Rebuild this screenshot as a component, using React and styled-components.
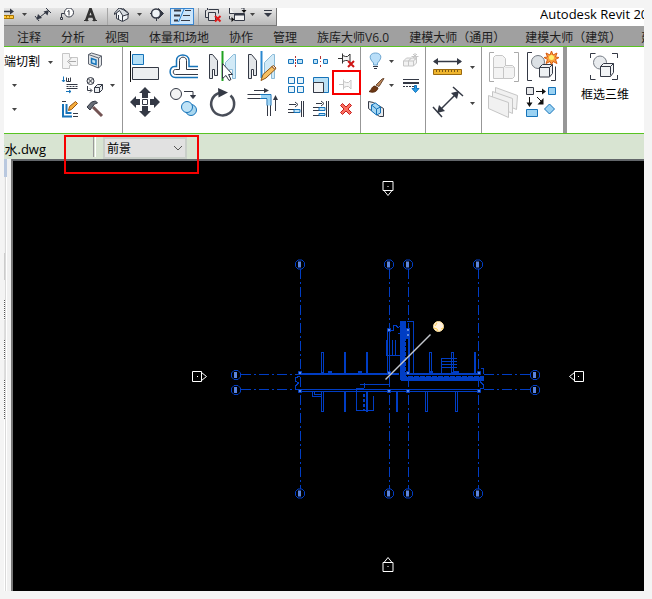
import React from "react";
import styled, { createGlobalStyle, css } from "styled-components";

const GlobalStyle = createGlobalStyle`
  * { box-sizing: border-box; }
  body {
    margin: 0;
    background: #f4f4f4;
    color: #1c1c1c;
    font: 12px/16px "Open Sans", "Noto Sans CJK SC", sans-serif;
  }
`;

const AppWindow = styled.main`
  margin: 8px 8px 8px 4px;
  overflow: hidden;
  background: #fff;
`;

const TitleBar = styled.header`
  display: flex;
  justify-content: space-between;
  height: 18px;
  overflow: hidden;
`;

const QuickAccess = styled.div`
  display: flex;
  flex: none;
  border-right: 1px solid #777;
  border-bottom: 1px solid #777;
  background: linear-gradient(#e6e6e6, #b9b9b9);
`;

const QuickButton = styled.button`
  display: block;
  flex: none;
  padding: 0;
  border: 0;
  background: ${(p) => (p.$active ? "#cbe5fb" : "none")};
  ${(p) => p.$active && css`box-shadow: inset 0 0 0 1px #3b86cf;`}
`;

const QuickDivider = styled.span`
  width: ${(p) => p.$w}px;
  background: linear-gradient(#a6a6a6, #a6a6a6) center / 1px 100% no-repeat;
`;

const Title = styled.h1`
  margin: 0;
  width: 104px;
  overflow: hidden;
  white-space: nowrap;
  font: inherit;
  font-size: 13px;
  line-height: 12px;
  color: #000;
`;

const TabStrip = styled.nav`
  display: flex;
  height: 21px;
  padding-left: 3px;
  overflow: hidden;
  background: #a0a0a0;
  border-bottom: 1px solid #58c322;
`;

const Tab = styled.button`
  flex: none;
  padding: 4px 10px 0;
  border: 0;
  background: none;
  color: #1e1e1e;
  font: inherit;
  white-space: nowrap;
`;

const Ribbon = styled.section`
  display: flex;
  height: 87px;
  background: #fff;
  border-bottom: 1px solid #58c322;
`;

const Panel = styled.div`
  display: flex;
  flex: none;
  padding: 2px ${(p) => p.$right || 0}px 0 ${(p) => p.$left || 0}px;
  border-right: ${(p) => p.$edge || 1}px solid #979797;
`;

const ToolGrid = styled.div`
  display: grid;
  align-content: start;
  grid-template-columns: ${(p) => p.$cols};
  grid-auto-rows: ${(p) => p.$row}px;
`;

const Tool = styled.button`
  position: relative;
  display: block;
  padding: 0;
  border: 0;
  background: none;
  font: inherit;
  text-align: left;
  white-space: nowrap;
`;

const CutTool = styled(Tool)`
  display: flex;
  align-items: center;
  justify-content: space-between;
  padding-top: 2px;
`;

const LabelTool = styled(Tool)`
  display: flex;
  flex-direction: column;
  align-items: center;
  gap: 4px;
  padding: 4px 12px 0 14px;
  height: 60px;
`;

const Highlight = styled.span`
  position: absolute;
  top: ${(p) => p.$top}px;
  left: ${(p) => p.$left}px;
  width: ${(p) => p.$w}px;
  height: ${(p) => p.$h}px;
  border: 2px solid #f60000;
  z-index: 2;
  pointer-events: none;
`;

const Svg = styled.svg`
  display: block;
`;

const OptionsBar = styled.section`
  position: relative;
  display: flex;
  align-items: center;
  height: 25px;
  background: #d8e4d2;
`;

const FileName = styled.span`
  display: flex;
  justify-content: flex-end;
  width: 42px;
  padding-top: 4px;
  overflow: hidden;
  color: #000;
  font-size: 13px;
  white-space: nowrap;
`;

const Separator = styled.span`
  width: 3px;
  height: 20px;
  margin-left: 47px;
  border-left: 1px solid #9a9a9a;
  border-right: 1px solid #fff;
`;

const SelectBox = styled.label`
  position: relative;
  display: flex;
  align-items: center;
  margin-left: 7px;
  padding-top: 3px;
`;

const Select = styled.select`
  appearance: none;
  width: 84px;
  height: 22px;
  padding: 2px 2px 0;
  border: 2px solid #c9cfc9;
  border-radius: 0;
  background: #e1e1e1;
  color: #000;
  font: inherit;
`;

const Chevron = styled(Svg)`
  position: absolute;
  right: 4px;
  top: 10px;
  pointer-events: none;
`;

const Workspace = styled.section`
  display: flex;
`;

const Gutter = styled.aside`
  display: flex;
  flex-direction: column;
  flex: none;
  width: 7px;
  background: linear-gradient(90deg, #fff 1px, #d9d9d9 1px, #d9d9d9 2px, #fff 2px, #fff 3px, #f0f0f0 3px);
`;

const GutterPiece = styled.span`
  width: ${(p) => (p.$wide ? 3 : 1)}px;
  height: ${(p) => p.$h}px;
  background: ${(p) =>
    p.$dots ? "repeating-linear-gradient(#555 0 1px, #fff 1px 2px)" : p.$color};
`;

const View = styled.div`
  flex: 1;
  min-width: 0;
  border-top: 2px solid #62666a;
  border-left: 2px solid #777;
  background: #000;
`;

const Drawing = styled.svg`
  display: block;
  width: 100%;
  height: auto;
`;

const D = "#343945";
const B = "#1673b9";
const L = "#bfe3f7";
const G = "#c6c6c6";

function Art({ box, children }) {
  const [, , w, h] = box;
  return (
    <Svg width={w} height={h} viewBox={box.join(" ")} fill="none" stroke={D} aria-hidden="true">
      {children}
    </Svg>
  );
}

const Caret = ({ box, x, y }) => (
  <Art box={box}>
    <path d={`M${x - 2} ${y - 1}h5l-2.5 3z`} fill="#444" stroke="none" />
  </Art>
);

function QuickBar() {
  const carets = (x, w, cx) => (
    <QuickButton aria-label="更多"><Caret box={[x, 8, w, 18]} x={cx} y={14} /></QuickButton>
  );
  return (
    <QuickAccess>
      <QuickButton aria-label="测量">
        <Art box={[4, 8, 12, 18]}>
          <path d="M4 11.500h8" strokeWidth="1.500" />
          <path d="M10 8.500l4 3-4 3z" fill={D} stroke="none" />
          <path d="M2 15.500h11.500v3H2z" fill="#ffc83b" stroke="#a87400" />
          <path d="M6.500 16v1.500M9.500 16v1.500" stroke="#a87400" />
        </Art>
      </QuickButton>
      {carets(16, 16, 24)}
      <QuickButton aria-label="对齐尺寸标注">
        <Art box={[32, 8, 22, 18]}>
          <path d="M38 18.500l9-7M35 16l4 5M46 8l5 5" />
          <path d="M36.500 19.500l1.500-5.500 4 4zM49 10l-1.500 5.500-4-4z" fill={D} stroke="none" />
        </Art>
      </QuickButton>
      <QuickButton aria-label="按类别标记">
        <Art box={[54, 8, 26, 18]}>
          <circle cx="69" cy="12.500" r="4.500" fill="#fff" />
          <path d="M67.500 11.500l1.500-1v5M64 13.500h-2.500v4" />
          <path d="M60.500 17.500h2v2h-2z" fill="#ddd" />
        </Art>
      </QuickButton>
      <QuickButton aria-label="文字">
        <Art box={[80, 8, 24, 18]}>
          <path d="M86 21l4.500-12.500L95 21M88 16.500h5" strokeWidth="2.500" stroke="#333" />
          <path d="M84 20.500h4.500M92.500 20.500h4.500" stroke="#333" />
        </Art>
      </QuickButton>
      <QuickDivider $w={6} />
      <QuickButton aria-label="默认三维视图">
        <Art box={[110, 8, 22, 18]}>
          <path d="M116.500 12.500v6l6 3 5.500-3v-6l-5.500-4.500z" fill="#f1f4f6" />
          <path d="M114.500 13l4.500-5 5 2 5 4-6 2-3.500-5.500-5 4z" fill="#d7dce1" />
          <path d="M122.500 16v5M118.500 15v4" />
        </Art>
      </QuickButton>
      {carets(132, 15, 139)}
      <QuickButton aria-label="剖面">
        <Art box={[147, 8, 23, 18]}>
          <path d="M158.500 8.500l5 5-5 5z" fill={D} />
          <circle cx="156" cy="13.500" r="4.500" fill="#eef2f5" strokeWidth="1.500" />
          <path d="M150 13.500h2M156.500 18v3" />
        </Art>
      </QuickButton>
      <QuickButton $active aria-label="细线" aria-pressed="true">
        <Art box={[170, 8, 24, 18]}>
          <path d="M174 10.500h7M174 15.500h6M174 20.500h4" strokeWidth="2" />
          <path d="M185 10.500h6M183 15.500h7M181 20.500h9" />
          <path d="M184.500 8l-6 14" stroke="#2581d2" />
        </Art>
      </QuickButton>
      <QuickDivider $w={8} />
      <QuickButton aria-label="关闭隐藏窗口">
        <Art box={[202, 8, 24, 18]}>
          <path d="M207.500 8v2M206.500 10.500h-1v7h3M208.500 9.500h10v4M208.500 12.500h7v8h-7z" fill="#e2e2e2" />
          <path d="M215 16l5.500 5.500M220.500 16l-5.500 5.500" stroke="#e11818" strokeWidth="2" />
        </Art>
      </QuickButton>
      <QuickButton aria-label="切换窗口">
        <Art box={[226, 8, 22, 18]}>
          <path d="M229.500 8v5.500h5M241 8h3v3M234.500 13.500h10v7h-10zM229.500 16v3h3" fill="#f2f2f2" />
          <path d="M235 14.500h9" strokeWidth="2" />
          <path d="M231.500 17l3 2.500-3 2.500zM241.500 10h5l-2.500 3z" fill="#111" stroke="none" />
        </Art>
      </QuickButton>
      {carets(248, 10, 252)}
      <QuickButton aria-label="自定义快速访问工具栏">
        <Art box={[258, 8, 18, 18]}>
          <path d="M264 10.500h8" />
          <path d="M264 13h8l-4 4z" fill={D} stroke="none" />
        </Art>
      </QuickButton>
    </QuickAccess>
  );
}

const Pin = ({ x, y, color }) => (
  <g stroke={color} fill="#f4f4f4">
    <path d={`M${x} ${y}h4M${x + 4.5} ${y - 5}v10M${x + 4.5} ${y - 3}l3 1h2l2.500-2.500v9l-2.500-2.500h-2l-3 1`} />
  </g>
);

const Cube = ({ x, y, s, color = D, fill = "#e9ecef" }) => (
  <g stroke={color} fill={fill}>
    <path d={`M${x} ${y + 3}h${s}v${s}h-${s}zM${x} ${y + 3}l3-3h${s}v${s}l-3 3M${x + s} ${y + 3}l3-3`} />
  </g>
);

function ModifyPanel() {
  return (
    <Panel>
      <ToolGrid $cols="54px 24px 24px 16px" $row={24}>
        <CutTool>
          端切割
          <Caret box={[46, 49, 12, 24]} x={50} y={61} />
        </CutTool>
        <Tool aria-label="连接端切割">
          <Art box={[58, 49, 24, 24]}>
            <path d="M62.500 53.500h7v4h8v8h-8v3h-7z" fill="#f5f5f5" stroke={G} />
            <path d="M76 61.500h-7M71.500 58l-4 3.500 4 3.500" stroke="#aaa" />
          </Art>
        </Tool>
        <Tool aria-label="墙洞口">
          <Art box={[82, 49, 24, 24]}>
            <path d="M88.500 54.500l3-1.500 10 3v9l-3 3-10-4z" fill="#e2e5e8" stroke="#5d636e" />
            <path d="M98.500 58v10M98.500 58l3-2M88.500 54.500l10 3.500" stroke="#5d636e" />
            <path d="M91.500 58.500l4.500 1.500v4.500l-4.500-1.500z" fill={L} stroke={B} strokeWidth="1.500" />
          </Art>
        </Tool>
        <span />
        <Tool aria-label="剪切"><Caret box={[4, 73, 54, 24]} x={14} y={85} /></Tool>
        <Tool aria-label="梁连接">
          <Art box={[58, 73, 24, 24]}>
            <path d="M66.500 77.500v4h4v-4M68.500 78v3M66.500 84.500h11M66.500 88.500h11" />
            <path d="M63.500 76.500v5M62 80l1.500 2 1.500-2M66 91.500h5M69 90l2 1.500-2 1.500" stroke={B} />
            <path d="M66.500 86.500h11" strokeDasharray="2 1" />
          </Art>
        </Tool>
        <Tool aria-label="拆分面">
          <Art box={[82, 73, 24, 24]}>
            <circle cx="90.500" cy="81" r="3.500" fill="#eee" />
            <path d="M88 78.500l5 5M93 78.500l-5 5M87.500 86v4.500h4M90 88.500l2 2-2 2" />
            <Cube x={94.5} y={84.5} s={5} />
          </Art>
        </Tool>
        <Tool aria-label="更多几何图形"><Caret box={[106, 73, 16, 24]} x={112} y={85} /></Tool>
        <Tool aria-label="连接"><Caret box={[4, 97, 54, 24]} x={14} y={109} /></Tool>
        <Tool aria-label="墙连接">
          <Art box={[58, 97, 24, 24]}>
            <path d="M62 101.500h4M73 113.500h5M73 116.500h5" />
            <path d="M63 104v12.500h9M66.500 104v9h5" stroke={B} strokeWidth="2" />
            <path d="M68.500 110.500l1-4 6-5 2 2-6 6z" fill="#f6ad3c" stroke="#97520d" />
          </Art>
        </Tool>
        <Tool aria-label="拆除">
          <Art box={[82, 97, 24, 24]}>
            <path d="M93 107l9 9" stroke="#735353" strokeWidth="3" />
            <path d="M87 107l4.500-5 4-1 2 2-3 1-4.500 6z" fill="#666c76" />
          </Art>
        </Tool>
      </ToolGrid>
    </Panel>
  );
}

const MirrorHalves = ({ x }) => (
  <>
    <path d={`M${x} 54.500h3l5 6v15h-3v-6h-2v9h-3z`} fill="#e3e6e9" />
    <path d={`M${x + 26} 54.500h-2l-8 8v13h4v-6h3v9h3z`} fill="#d2eaf7" stroke="#8abbd8" />
  </>
);

function EditPanel() {
  return (
    <Panel $left={3} $right={2}>
      <ToolGrid $cols="repeat(4, 39px)" $row={36}>
        <Tool aria-label="对齐">
          <Art box={[126, 49, 39, 36]}>
            <path d="M130.500 51v31" stroke="#111" />
            <path d="M132.500 54.500h11v10h-11z" fill="#b4dff6" stroke={B} />
            <path d="M132.500 67.500h26v12h-26z" fill="#eceef0" />
          </Art>
        </Tool>
        <Tool aria-label="偏移">
          <Art box={[165, 49, 39, 36]}>
            <path d="M198 66.500h-9v-6c0-7.500-12.500-7.500-12.500 0v6h-2c-6 0-6 11 1 11h22.500" stroke={B} strokeWidth="1.500" />
            <path d="M198 69.500h-11.500v-9c0-4.500-7-4.500-7 0v9h-4c-3 0-3 5 0 5h22.500" />
          </Art>
        </Tool>
        <Tool aria-label="镜像 - 拾取轴">
          <Art box={[204, 49, 39, 36]}>
            <MirrorHalves x={209.5} />
            <path d="M222.500 51v30" stroke="#21a321" strokeWidth="2" />
            <path d="M222.500 63.500v15l3.500-3 3 5 2-1-2.500-5h4z" fill="#fff" />
          </Art>
        </Tool>
        <Tool aria-label="镜像 - 绘制轴">
          <Art box={[243, 49, 39, 36]}>
            <MirrorHalves x={248.5} />
            <path d="M261.500 51v27" stroke="#2b88d0" strokeWidth="2" />
            <path d="M261 80.500l2-6 9-8 3 3-9 8.500z" fill="#f7c063" stroke="#8d5513" />
            <path d="M272 66.500l1.500-1 2.500 2.500-1 1.500z" fill="#f6dedd" stroke="#8d5513" />
          </Art>
        </Tool>
        <Tool aria-label="移动">
          <Art box={[126, 85, 39, 36]}>
            <path d="M145 87l6 6h-3v5h-6v-5h-3zM145 117l6-6h-3v-5h-6v5h-3zM130 102l6-6v3h4v6h-4v3zM160 102l-6-6v3h-4v6h4v3z" fill={D} stroke="none" />
            <path d="M142.500 99.500h5v5h-5z" fill="#fff" />
          </Art>
        </Tool>
        <Tool aria-label="复制">
          <Art box={[165, 85, 39, 36]}>
            <circle cx="176" cy="94" r="5.500" fill="#f2f3f4" />
            <path d="M184 91.500h9v4" />
            <path d="M190.500 95.500h5l-2.500 3z" fill={D} />
            <circle cx="191" cy="110" r="5.500" fill="#a9d7ef" stroke={B} />
            <circle cx="187" cy="107" r="5.500" fill={L} stroke={B} />
          </Art>
        </Tool>
        <Tool aria-label="旋转">
          <Art box={[204, 85, 39, 36]}>
            <path d="M230.500 95.500a11.500 11.500 0 1 1 -11.500 -2.500" stroke="#484d58" strokeWidth="2.500" />
            <path d="M218 88l10 4.500-9.500 5z" fill={D} stroke="none" />
          </Art>
        </Tool>
        <Tool aria-label="修剪/延伸为角">
          <Art box={[243, 85, 39, 36]}>
            <path d="M254 90.500h13M247.500 94.500h13M247.500 98.500h13M267.500 105v11M270.500 105v11M275.500 98v13" />
            <path d="M261 96.500h8v9" stroke="#9dd5f5" strokeWidth="3" />
            <path d="M260 94.500h11v11M260 98.500h7v7" stroke={B} />
            <path d="M264 88l5 2.500-5 2.500zM273 100l2.500-5 2.500 5z" fill={D} stroke="none" />
          </Art>
        </Tool>
      </ToolGrid>
      <ToolGrid $cols="26px 25px 25px" $row={24}>
        <Tool aria-label="拆分图元">
          <Art box={[282, 49, 26, 24]}>
            <path d="M288.500 59.500h5v4h-5zM297.500 59.500h5v4h-5z" fill={L} stroke={B} />
            <path d="M295.500 56v12" stroke="#b53131" strokeDasharray="2 1" />
          </Art>
        </Tool>
        <Tool aria-label="用间隙拆分">
          <Art box={[308, 49, 25, 24]}>
            <path d="M313.500 59.500h4v4h-4zM323.500 59.500h4v4h-4z" fill={L} stroke={B} />
            <path d="M320.500 56v3M320.500 65v2M320.500 61v1" stroke="#b53131" />
          </Art>
        </Tool>
        <Tool aria-label="解锁">
          <Art box={[333, 49, 25, 24]}>
            <Pin x={338} y={58.5} color="#333" />
            <path d="M348 61l6 6M354 61l-6 6" stroke="#cf1515" strokeWidth="2" />
          </Art>
        </Tool>
        <Tool aria-label="阵列">
          <Art box={[282, 73, 26, 24]}>
            <path d="M288.500 77.500h6v6h-6zM297.500 77.500h6v6h-6zM288.500 86.500h6v6h-6zM297.500 86.500h6v6h-6z" fill="#e8f4fa" stroke={B} />
          </Art>
        </Tool>
        <Tool aria-label="缩放">
          <Art box={[308, 73, 25, 24]}>
            <path d="M313.500 77.500h15v15h-15z" fill="#b9e0f5" stroke={B} />
            <path d="M313.500 82.500h10v10h-10z" fill="#f0f2f4" />
          </Art>
        </Tool>
        <Tool aria-label="锁定">
          <Art box={[333, 73, 25, 24]}><Pin x={339} y={84.5} color={G} /></Art>
          <Highlight $top={-3} $left={-1} $w={29} $h={25} />
        </Tool>
        <Tool aria-label="修剪/延伸单个图元">
          <Art box={[282, 97, 26, 24]}>
            <path d="M289 104.500h7M295 102l3 2.500-3 2.500M288 109.500h6M288 112.500h6M301.500 101v16M303.500 101v16" />
            <path d="M294 109.500h6v3h-6z" fill={L} stroke={B} />
          </Art>
        </Tool>
        <Tool aria-label="修剪/延伸多个图元">
          <Art box={[308, 97, 25, 24]}>
            <path d="M316 103.500h6M321 101l3 2.500-3 2.500M313 107.500h6M313 110.500h6M313 115.500h6M326.500 101v16M328.500 101v16" />
            <path d="M319 107.500h6v3h-6zM319 113.500h6v2h-6z" fill={L} stroke={B} />
          </Art>
        </Tool>
        <Tool aria-label="删除">
          <Art box={[333, 97, 25, 24]}>
            <path d="M340.500 105.500l2-2 3.500 3.500 3.500-3.500 2 2-3.500 3.500 3.500 3.500-2 2-3.500-3.500-3.500 3.500-2-2 3.500-3.500z" fill="#fa7060" stroke="#c71d1d" />
          </Art>
        </Tool>
      </ToolGrid>
    </Panel>
  );
}

function ViewPanel() {
  return (
    <Panel $left={3} $right={2}>
      <ToolGrid $cols="24px 9px 26px" $row={24}>
        <Tool aria-label="在视图中隐藏">
          <Art box={[364, 49, 24, 24]}>
            <path d="M373.500 65v-2c-6-6-3-10 2-10s8 4 2 10v2z" fill="#b9def8" stroke="#6aa4cf" />
            <path d="M373 66.500h5M374 68.500h3" />
          </Art>
        </Tool>
        <Tool aria-label="隐藏选项"><Caret box={[388, 49, 9, 24]} x={391} y={61} /></Tool>
        <Tool aria-label="置换图元">
          <Art box={[397, 49, 26, 24]}>
            <Cube x={403.500} y={58} s={5} color={G} fill="#f2f2f2" />
            <Cube x={408.500} y={58} s={5} color={G} fill="#f2f2f2" />
            <path d="M415 53v7M411.500 56.500h7M413 54l4 4M417 54l-4 4" stroke={G} />
          </Art>
        </Tool>
        <Tool aria-label="替换视图中的图形">
          <Art box={[364, 73, 24, 24]}>
            <path d="M376 85l6-6 2-.5-5 8z" fill="#bd875a" stroke="#6d4b33" />
            <path d="M369 91.500c3-1 2-5 6-5.500l3 2c-1 4-5 5-9 3.500z" fill="#6d3815" stroke="#55290d" />
          </Art>
        </Tool>
        <Tool aria-label="替换选项"><Caret box={[388, 73, 9, 24]} x={391} y={85} /></Tool>
        <Tool aria-label="线处理">
          <Art box={[397, 73, 26, 24]}>
            <path d="M403 79.500h16" />
            <path d="M403 83h16" strokeWidth="2" />
            <path d="M403 86.500h12" strokeDasharray="2 1" />
            <path d="M414.500 85.500h2v3h2.500l-3.500 4-3.500-4h2.500z" fill="#249eea" stroke={B} />
          </Art>
        </Tool>
        <Tool aria-label="选择框">
          <Art box={[364, 97, 24, 24]}>
            <path d="M368.500 101.500l5 1 10 6v8l-4 0-11-8z" fill="#e6e9ec" />
            <path d="M371.500 105l4-2 5 4v6l-4 2-5-4z" fill="#a5d6f2" stroke={B} />
            <path d="M371.500 105l5 4v6M376.500 109l4-2" stroke={B} />
          </Art>
        </Tool>
      </ToolGrid>
    </Panel>
  );
}

function MeasurePanel() {
  return (
    <Panel $left={4} $right={3}>
      <ToolGrid $cols="38px 10px" $row={36}>
        <Tool aria-label="测量两个参照">
          <Art box={[430, 49, 38, 36]}>
            <path d="M434 61.500h27" strokeWidth="1.500" />
            <path d="M438 58l-5 3.500 5 3.500zM457 58l5 3.500-5 3.500z" fill={D} stroke="none" />
            <path d="M433.500 69.500h28v5h-28z" fill="#efb52e" stroke="#9a6a10" />
            <path d="M436.500 70v2M439.500 70v2M442.500 70v2M445.500 70v2M448.500 70v2M451.500 70v2M454.500 70v2M457.500 70v2" stroke="#805b12" />
          </Art>
        </Tool>
        <Tool aria-label="测量选项"><Caret box={[468, 49, 10, 36]} x={472} y={67} /></Tool>
        <Tool aria-label="尺寸标注">
          <Art box={[430, 85, 38, 36]}>
            <path d="M438 112l19-19M433 107l9 10M453 87l10 9" strokeWidth="1.500" />
            <path d="M437 113l2-8 6 6zM459 91l-8 2 6 6z" fill={D} stroke="none" />
          </Art>
        </Tool>
        <Tool aria-label="标注选项"><Caret box={[468, 85, 10, 36]} x={472} y={103} /></Tool>
      </ToolGrid>
    </Panel>
  );
}

function CreatePanel() {
  return (
    <Panel $left={4} $right={1} $edge={4}>
      <ToolGrid $cols="38px 38px" $row={36}>
        <Tool aria-label="创建部件">
          <Art box={[486, 49, 38, 36]}>
            <path d="M494 52.500h-4.500v29h4.500M514 52.500h4.500v29h-4.500" stroke="#aaa" />
            <g stroke={G} fill="#f3f3f3">
              <path d="M493.500 57.500l2-2h7l3 3v9h9v9l-2 2h-19z" />
              <path d="M493.500 67.500h10v11M503.500 67.500l2-2h7l2 2" />
            </g>
          </Art>
        </Tool>
        <Tool aria-label="创建组">
          <Art box={[524, 49, 38, 36]}>
            <path d="M532 52.500h-4.500v28h4.500M551 80.500h4.500v-14" />
            <circle cx="538" cy="62" r="6.500" fill="#dce1e5" stroke="#737982" />
            <path d="M539.500 67.500l3-3h10v9l-3 3.500h-10z" fill="#edf0f3" />
            <path d="M539.500 67.500h10v9M549.500 67.500l3-3" />
            <path d="M551.500 51l1.500 4 4-2-1.500 4 3.500.5-3.500 2 1.500 4-4-2-1.500 3-1.500-3-4 2 1.500-4-3.500-2 3.500-.5-1.500-4 4 2z" fill="#f9a03c" stroke="#d85a10" />
            <circle cx="551.500" cy="57.500" r="2.500" fill="#fff06a" stroke="none" />
          </Art>
        </Tool>
        <Tool aria-label="创建零件">
          <Art box={[486, 85, 38, 36]}>
            <g stroke={G} fill="#f1f1f1">
              <path d="M495.500 87.500l22 8-1 14-21-9z" />
              <path d="M492.500 91.500l20 7v15l-20-9z" />
              <path d="M488.500 95.500l20 7v15l-20-9z" />
            </g>
          </Art>
        </Tool>
        <Tool aria-label="创建类似">
          <Art box={[524, 85, 38, 36]}>
            <path d="M526.500 87.500h7v7h-7z" fill="#e5e6e8" />
            <path d="M548.500 87.500h7v7h-7zM526.500 109.500h11v7h-11z" fill="#9bd2f2" stroke={B} />
            <path d="M549.500 104l5 5-5 5-5-5z" fill="#9bd2f2" stroke={B} />
            <path d="M536 91.500h7M529.500 97v7M537 97l5 5" stroke="#111" />
            <path d="M542 88.500l4 3-4 3zM526.500 102.500h6l-3 4.500zM543.500 98v6.500h-6z" fill="#111" stroke="none" />
          </Art>
        </Tool>
      </ToolGrid>
    </Panel>
  );
}

const gridX = [300, 389, 408, 478];
const gridY = [375, 390];
const solidWalls = [[344, 352], [366, 352], [474, 352], [344, 391], [366, 391], [396, 391]];
const hollowWalls = [[321, 352], [429, 352], [451, 352], [321, 391], [425, 391], [455, 391]];

const Bubble = ({ x, y }) => (
  <g>
    <path d={`M${x - 2} ${y - 4.500}h4l2.500 2.500v4l-2.500 2.500h-4l-2.500-2.500v-4z`} />
    <path d={`M${x - 2} ${y - 3}h3v6h-3z`} fill="#5b84de" stroke="none" />
  </g>
);

const Elevation = ({ x, y, turn }) => (
  <g transform={`translate(${x} ${y}) rotate(${turn})`} stroke="#fff">
    <path d="M-5 -5h9v10h-9zM4 -4l5 4-5 4" />
    <path d="M-.5 -.5h1v1h-1z" fill="#fff" stroke="none" />
  </g>
);

function FloorPlan() {
  return (
    <Drawing viewBox="13 161 631 430" fill="none" stroke="#003dc4" role="img" aria-label="楼层平面图">
      <g strokeDasharray="10 3 2 3">
        {gridX.map((x) => <path key={x} d={`M${x + 0.5} 269v220`} />)}
        {gridY.map((y) => <path key={y} d={`M241 ${y - 0.5}h57M484 ${y - 0.5}h46`} />)}
      </g>
      {gridX.map((x) => (
        <g key={x}><Bubble x={x} y={264.500} /><Bubble x={x} y={493.500} /></g>
      ))}
      {gridY.map((y) => (
        <g key={y}><Bubble x={236} y={y} /><Bubble x={535} y={y} /></g>
      ))}
      <g shapeRendering="crispEdges">
        <path d="M299 374h100M408 374h71" strokeWidth="2" />
        <path d="M300 389.500h180M300 391.500h180" />
        {solidWalls.map(([x, y]) => <path key={`${x}-${y}`} d={`M${x + 1} ${y}v21`} strokeWidth="2" />)}
        {hollowWalls.map(([x, y]) => <path key={`${x}-${y}`} d={`M${x + 0.5} ${y + 0.5}h2v20h-2z`} />)}
        <path d="M441.500 373v-14.500h15M441.500 361.500h15M441.500 364.500h15M441.500 367.500h15" />
        <path d="M312.500 391v5.500h9M314.500 392v2.500h7" />
        <path d="M356.500 388v22.500h7M363.500 410.500h10v-15M360 384.500h30M364.500 383v5M356 388.500h8" />
        <path d="M364 394v17" strokeWidth="2" strokeDasharray="3 2" />
        <path d="M400 321h6v59h-6z" fill="#003dc4" stroke="none" />
        <path d="M401 376h83v5h-83z" fill="#003dc4" stroke="none" />
        <path d="M407 376.500h75" stroke="#000" strokeDasharray="1 5" />
        <path d="M405.500 331v44" stroke="#000" strokeDasharray="1 4" />
        <path d="M407 321.500h6.500v53M409 331v43" />
        <path d="M409 328v47" strokeWidth="2" />
        <path d="M387.500 329v45M389.500 329v45M386.500 340v15.500h13.500M392.500 340v15M395.500 340v15M387 330.500h6v-5.500h3l2 3 2-2" />
        <path d="M398 333.500h3M405 330h4v8h-3z" fill="#003dc4" />
        <path d="M299.500 376l-4 2v3l3 2-3 3v3h5M480.500 368h3v6M480 388.500h3v-4l-3-3" />
        <path d="M328 372h4M358 372h4M429 372h4M454 372h5" strokeWidth="2" />
      </g>
      <g fill="#608be0" stroke="#003dc4">
        {[299.500, 388.500, 407.500, 478.500].map((x) => (
          <g key={x}><path d={`M${x - 1} 371.500h3v3h-3zM${x - 1} 389.500h3v3h-3z`} /></g>
        ))}
        <path d="M387.500 328.500h3v3h-3zM406.500 328.500h3v3h-3zM406.500 333.500h3v3h-3z" />
      </g>
      <path d="M385.500 379.500l45-45" stroke="#c4c7cd" strokeWidth="1.500" />
      <circle cx="438.500" cy="326.500" r="5" fill="#fff1df" stroke="#ffe19b" />
      <path d="M434 328l3 1 1 2M437 323l-2 3M441 329l2-1" stroke="#ffd04f" />
      <Elevation x={388} y={186.500} turn={90} />
      <Elevation x={197.500} y={376.500} turn={0} />
      <Elevation x={578.500} y={376.500} turn={180} />
      <Elevation x={388} y={566.500} turn={-90} />
    </Drawing>
  );
}

const tabs = ["注释", "分析", "视图", "体量和场地", "协作", "管理", "族库大师V6.0", "建模大师（通用）", "建模大师（建筑）", "建"];

export default function App() {
  return (
    <>
      <GlobalStyle />
      <AppWindow>
        <TitleBar>
          <QuickBar />
          <Title>Autodesk Revit 20</Title>
        </TitleBar>
        <TabStrip>
          {tabs.map((name) => <Tab key={name}>{name}</Tab>)}
        </TabStrip>
        <Ribbon>
          <ModifyPanel />
          <EditPanel />
          <ViewPanel />
          <MeasurePanel />
          <CreatePanel />
          <LabelTool>
            <Art box={[588, 53, 34, 32]}>
              <path d="M590.500 60v-4.500h5M612 55.500h5.500v4.500M590.500 77v4.500h5M612 81.500h5.500v-4.500" />
              <circle cx="600" cy="64.500" r="6.500" fill="#e8ebee" stroke="#777d86" />
              <path d="M600.500 68.500l3-3h10v9l-3 4h-10z" fill="#f2f4f6" />
              <path d="M600.500 68.500h10v9M610.500 68.500l3-3" />
            </Art>
            框选三维
          </LabelTool>
        </Ribbon>
        <OptionsBar>
          <FileName>排水.dwg</FileName>
          <Separator />
          <SelectBox>
            <Select aria-label="导入图层" defaultValue="前景">
              <option>前景</option>
              <option>背景</option>
            </Select>
            <Chevron width="10" height="8" viewBox="0 0 10 8" fill="none" stroke="#555">
              <path d="M1 2l4 4 4-4" />
            </Chevron>
          </SelectBox>
          <Highlight $top={1} $left={60} $w={135} $h={39} />
        </OptionsBar>
        <Workspace>
          <Gutter>
            <GutterPiece $wide $h={18} $color="#b9c8df" />
            <GutterPiece $h={76} $color="#f0f0f0" />
            <GutterPiece $h={27} $color="#ccc" />
            <GutterPiece $h={20} $color="#f4f4f4" />
            <GutterPiece $h={20} $dots />
            <GutterPiece $h={20} $color="#ddd" />
            <GutterPiece $h={20} $dots />
            <GutterPiece $h={20} $color="#ddd" />
            <GutterPiece $h={40} $dots />
          </Gutter>
          <View>
            <FloorPlan />
          </View>
        </Workspace>
      </AppWindow>
    </>
  );
}
